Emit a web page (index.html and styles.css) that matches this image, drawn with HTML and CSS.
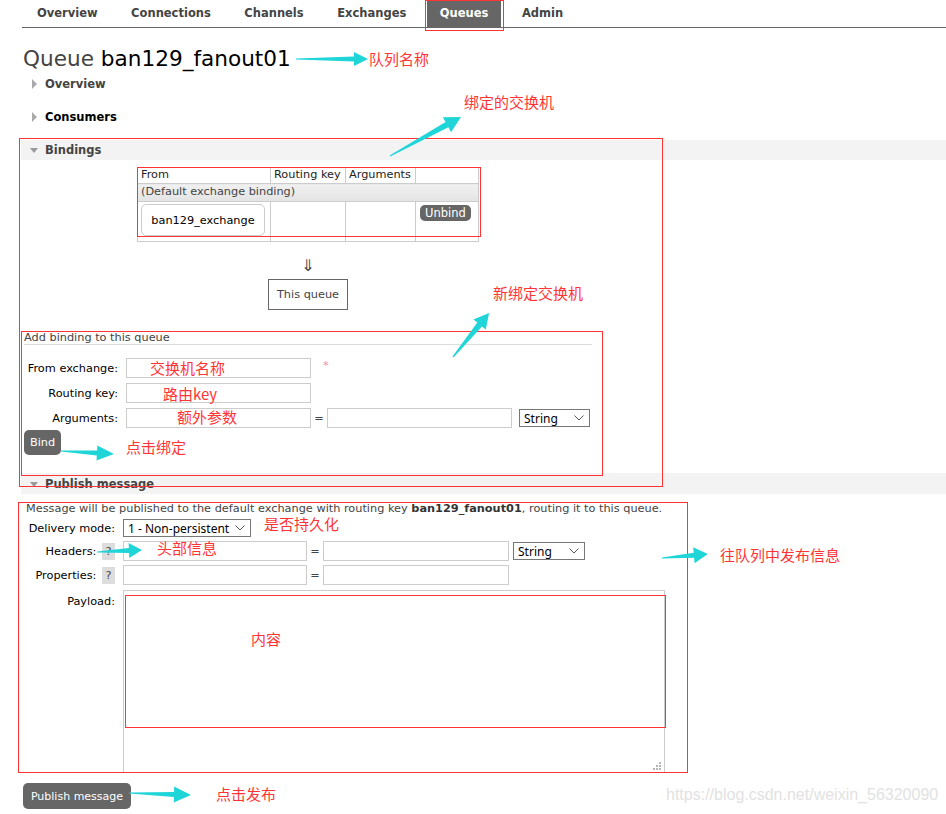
FILE: index.html
```html
<!DOCTYPE html>
<html lang="zh">
<head>
<meta charset="utf-8">
<title>Queue ban129_fanout01</title>
<link rel="stylesheet" href="styles.css">
</head>
<body>
<nav class="tabs">
  <span class="tab">Overview</span>
  <span class="tab">Connections</span>
  <span class="tab">Channels</span>
  <span class="tab">Exchanges</span>
  <span class="tab tab-active">Queues</span>
  <span class="tab">Admin</span>
</nav>
<main class="page">
  <h1 class="title"><span class="title-kind">Queue</span> ban129_fanout01</h1>

  <div class="sec sec-closed first"><span class="sec-icon"><span class="tri-right"></span></span><span class="sec-title muted">Overview</span></div>
  <div class="sec sec-closed"><span class="sec-icon"><span class="tri-right"></span></span><span class="sec-title">Consumers</span></div>
  <div class="sec sec-open"><span class="sec-icon"><span class="tri-down"></span></span><span class="sec-title muted">Bindings</span></div>

  <div class="bind-body">
    <table class="bind-table">
      <tr class="row-head"><th class="c-from">From</th><th class="c-key">Routing key</th><th class="c-args">Arguments</th><th class="c-act"></th></tr>
      <tr class="row-default"><td colspan="4">(Default exchange binding)</td></tr>
      <tr class="row-data">
        <td class="c-from"><span class="exch-box">ban129_exchange</span></td>
        <td></td><td></td>
        <td class="c-act"><span class="btn btn-small">Unbind</span></td>
      </tr>
      <tr class="row-pad"><td></td><td></td><td></td><td></td></tr>
    </table>
    <div class="down-arrow">⇓</div>
    <div class="this-queue">This queue</div>

    <h3 class="sub">Add binding to this queue</h3>
    <div class="form">
      <div class="frow">
        <label class="flabel">From exchange:</label>
        <span class="input"></span>
        <span class="req">*</span>
      </div>
      <div class="frow">
        <label class="flabel">Routing key:</label>
        <span class="input"></span>
      </div>
      <div class="frow">
        <label class="flabel">Arguments:</label>
        <span class="input"></span>
        <span class="eq">=</span>
        <span class="input"></span>
        <span class="select sel-str"><span>String</span><svg width="10" height="6" viewBox="0 0 10 6"><path d="M0.5 0.5 L5 5 L9.5 0.5" fill="none" stroke="#555" stroke-width="1"/></svg></span>
      </div>
    </div>
    <span class="btn btn-bind">Bind</span>
  </div>

  <div class="sec sec-open pub-head"><span class="sec-icon"><span class="tri-down"></span></span><span class="sec-title muted">Publish message</span></div>

  <div class="pub-body">
    <p class="pub-note">Message will be published to the default exchange with routing key <b>ban129_fanout01</b>, routing it to this queue.</p>
    <div class="prow">
      <label class="plabel">Delivery mode:</label>
      <span class="select sel-mode"><span>1 - Non-persistent</span><svg width="10" height="6" viewBox="0 0 10 6"><path d="M0.5 0.5 L5 5 L9.5 0.5" fill="none" stroke="#555" stroke-width="1"/></svg></span>
    </div>
    <div class="prow">
      <label class="plabel">Headers: <span class="help">?</span></label>
      <span class="input pin"></span>
      <span class="eq">=</span>
      <span class="input pin"></span>
      <span class="select sel-str2"><span>String</span><svg width="10" height="6" viewBox="0 0 10 6"><path d="M0.5 0.5 L5 5 L9.5 0.5" fill="none" stroke="#555" stroke-width="1"/></svg></span>
    </div>
    <div class="prow">
      <label class="plabel">Properties: <span class="help">?</span></label>
      <span class="input pin"></span>
      <span class="eq">=</span>
      <span class="input pin"></span>
    </div>
    <div class="prow prow-top">
      <label class="plabel">Payload:</label>
      <div class="payload-wrap">
        <div class="payload"></div>
        <svg class="grip" width="9" height="9" viewBox="0 0 9 9">
          <g fill="#b5b5b5">
            <rect x="6" y="0" width="2" height="2"/>
            <rect x="3" y="3" width="2" height="2"/>
            <rect x="6" y="3" width="2" height="2"/>
            <rect x="0" y="6" width="2" height="2"/>
            <rect x="3" y="6" width="2" height="2"/>
            <rect x="6" y="6" width="2" height="2"/>
          </g>
        </svg>
        <div class="payload-mark"></div>
      </div>
    </div>
  </div>
  <span class="btn btn-pub">Publish message</span>
</main>

<div class="overlay">
  <svg class="marks" width="946" height="814" viewBox="0 0 946 814">
    <g fill="none" stroke="#ff3535" stroke-width="1">
      <rect x="425.5" y="0.5" width="78" height="30"/>
      <rect x="19.5" y="138.5" width="643" height="348"/>
      <rect x="137.5" y="167.5" width="343" height="69"/>
      <rect x="21.5" y="331.5" width="581" height="144"/>
      <rect x="18.5" y="502.5" width="669" height="270"/>
    </g>
    <g fill="#20d5d8">
      <g transform="translate(296 59)"><polygon points="0,-0.6 58,-2.5 58,-7 72,0 58,7 58,2.5 0,0.6"/></g>
      <g transform="translate(390 156) rotate(-28.8)"><polygon points="0,-0.6 65,-3 65,-8.5 81,0 65,8.5 65,3 0,0.6"/></g>
      <g transform="translate(453 357) rotate(-50.7)"><polygon points="0,-0.6 42,-3 42,-8 57,0 42,8 42,3 0,0.6"/></g>
      <g transform="translate(61 451) rotate(3.2)"><polygon points="0,-0.6 36,-2.5 36,-7.5 53,0 36,7.5 36,2.5 0,0.6"/></g>
      <g transform="translate(97 552) rotate(-2.5)"><polygon points="0,-0.6 32,-2.5 32,-7.5 45,0 32,7.5 32,2.5 0,0.6"/></g>
      <g transform="translate(662 558) rotate(-5)"><polygon points="0,-0.6 32,-2.5 32,-8 46,0 32,8 32,2.5 0,0.6"/></g>
      <g transform="translate(129 793) rotate(1.8)"><polygon points="0,-0.6 45,-2.5 45,-8 62,0 45,8 45,2.5 0,0.6"/></g>
    </g>
  </svg>
  <span class="note n1">队列名称</span>
  <span class="note n2">绑定的交换机</span>
  <span class="note n3">新绑定交换机</span>
  <span class="note n4">交换机名称</span>
  <span class="note n5">路由key</span>
  <span class="note n6">额外参数</span>
  <span class="note n7">点击绑定</span>
  <span class="note n8">是否持久化</span>
  <span class="note n9">头部信息</span>
  <span class="note n10">往队列中发布信息</span>
  <span class="note n11">内容</span>
  <span class="note n12">点击发布</span>
  <span class="watermark">https://blog.csdn.net/weixin_56320090</span>
</div>
</body>
</html>
```

FILE: styles.css
```css
* { box-sizing: border-box; }

html, body {
  margin: 0;
  padding: 0;
}

body {
  position: relative;
  width: 946px;
  height: 814px;
  overflow: hidden;
  background: #fff;
  color: #000;
  font-family: "DejaVu Sans", Verdana, sans-serif;
  font-size: 11.3px;
}

/* ---------- top tabs ---------- */
.tabs {
  display: flex;
  gap: 7.5px;
  margin: 0 0 0 22px;
  padding-left: 2px;
  height: 28px;
  border-bottom: 1px solid #666;
}

.tab {
  padding: 0 13px;
  line-height: 27px;
  font-size: 11.5px;
  font-weight: bold;
  color: #444;
}

.tab-active {
  background: #666;
  color: #fff;
}

/* ---------- page ---------- */
.page {
  padding-left: 21px;
}

.title {
  margin: 18px 0 0 2px;
  font-size: 21.6px;
  line-height: 26px;
  font-weight: normal;
  color: #000;
}

.title-kind { color: #444; }

/* ---------- section headers ---------- */
.sec {
  display: flex;
  align-items: center;
  height: 20px;
  margin-top: 13px;
}

.sec.first { margin-top: 2px; }

.sec-open { background: #f3f3f3; }

.sec-icon {
  display: flex;
  align-items: center;
  width: 24px;
  height: 20px;
}

.tri-right {
  margin-left: 11px;
  width: 0;
  height: 0;
  border-top: 5px solid transparent;
  border-bottom: 5px solid transparent;
  border-left: 5px solid #aaa;
}

.tri-down {
  margin-left: 9px;
  width: 0;
  height: 0;
  border-left: 4px solid transparent;
  border-right: 4px solid transparent;
  border-top: 5px solid #999;
}

.sec-title {
  font-weight: bold;
  font-size: 11.5px;
  color: #000;
}

.sec-title.muted { color: #444; }

/* ---------- bindings ---------- */
.bind-body {
  width: 568px;
  margin-left: 3px;
  display: flex;
  flex-direction: column;
  align-items: center;
}

.bind-table {
  margin-top: 7px;
  border-collapse: collapse;
  color: #444;
  font-size: 11.3px;
}

.bind-table th,
.bind-table td {
  border: 1px solid #ccc;
  padding: 0 3px;
  text-align: left;
  font-weight: normal;
  vertical-align: top;
}

.row-head th { height: 16px; line-height: 14px; color: #222; }
.c-from { width: 133px; }
.c-key { width: 75px; }
.c-args { width: 70px; }
.c-act { width: 63px; }

.row-default td {
  height: 18px;
  line-height: 16px;
  background: linear-gradient(#f0f0f0, #e4e4e4);
}

.row-data td { height: 35px; padding-top: 2px; }
.row-data .c-act { padding: 3px 4px 0; }

.row-pad td { height: 5px; padding: 0; }

.exch-box {
  display: flex;
  align-items: center;
  justify-content: center;
  width: 124px;
  height: 32px;
  border: 1px solid #ccc;
  border-radius: 5px;
  background: #fff;
  color: #000;
}

.btn {
  display: inline-flex;
  align-items: center;
  justify-content: center;
  background: #666;
  color: #fff;
  border-radius: 5px;
  font-size: 11.3px;
}

.btn-small {
  width: 51px;
  height: 16px;
  font-size: 11.5px;
}

.down-arrow {
  margin-top: 15px;
  font-size: 16px;
  line-height: 18px;
  color: #444;
}

.this-queue {
  margin-top: 4px;
  width: 80px;
  height: 31px;
  border: 1px solid #666;
  display: flex;
  align-items: center;
  justify-content: center;
  color: #444;
}

.sub {
  align-self: stretch;
  margin: 21px 0 0;
  font-size: 11.3px;
  line-height: 13px;
  font-weight: normal;
  color: #444;
  border-bottom: 1px solid #ddd;
}

.form {
  align-self: stretch;
  margin-top: 13px;
  display: flex;
  flex-direction: column;
  gap: 5px;
}

.frow {
  display: flex;
  align-items: center;
  height: 20px;
}

.flabel {
  width: 94px;
  text-align: right;
  margin-right: 8px;
}

.input {
  display: block;
  width: 185px;
  height: 20px;
  border: 1px solid #ccc;
  background: #fff;
}

.req {
  margin-left: 12px;
  color: #f88;
  align-self: flex-start;
  margin-top: 1px;
}

.eq {
  width: 16px;
  text-align: center;
  color: #444;
}

.select {
  display: flex;
  align-items: center;
  justify-content: space-between;
  height: 18px;
  border: 1px solid #777;
  background: #fff;
  padding: 0 5px 0 4px;
  font-family: "Noto Sans", "DejaVu Sans", sans-serif;
  font-size: 12px;
  color: #000;
}

.sel-str { width: 71px; margin-left: 7px; }

.btn-bind {
  align-self: flex-start;
  margin-top: 2px;
  width: 37px;
  height: 25px;
}

/* ---------- publish ---------- */
.pub-head { margin-top: 18px; height: 21px; padding-top: 1px; }

.pub-body {
  margin-left: 5px;
  width: 644px;
}

.pub-note {
  margin: 9px 0 0;
  line-height: 12px;
  color: #444;
  white-space: nowrap;
}

.pub-note b { color: #333; }

.prow {
  display: flex;
  align-items: center;
  margin-top: 4px;
  min-height: 18px;
}

.prow-top { align-items: flex-start; margin-top: 5px; }

.plabel {
  width: 89px;
  margin-right: 8px;
  text-align: right;
  white-space: nowrap;
}

.prow-top .plabel { margin-top: 5px; }

.help {
  display: inline-block;
  width: 13px;
  height: 17px;
  margin-left: 2px;
  line-height: 17px;
  text-align: center;
  background: #ddd;
  color: #444;
  vertical-align: middle;
}

.pin { width: 184px; }
.pin + .eq + .pin { width: 186px; }

.sel-mode { width: 128px; }
.sel-str2 { width: 72px; margin-left: 4px; }

.payload-wrap {
  position: relative;
  width: 542px;
  height: 183px;
}

.payload {
  width: 542px;
  height: 183px;
  border: 1px solid #ccc;
  background: #fff;
}

.grip {
  position: absolute;
  right: 3px;
  bottom: 2px;
}

.payload-mark {
  position: absolute;
  left: 2px;
  top: 5px;
  width: 541px;
  height: 133px;
  border: 1px solid #ff3535;
}

.btn-pub {
  margin-top: 10px;
  margin-left: 2px;
  width: 108px;
  height: 26px;
  font-size: 11px;
}

/* ---------- annotation overlay ---------- */
.overlay {
  position: absolute;
  left: 0;
  top: 0;
  width: 946px;
  height: 814px;
  pointer-events: none;
}

.marks {
  position: absolute;
  left: 0;
  top: 0;
}

.note {
  position: absolute;
  font-family: "Noto Sans CJK SC", "Noto Sans", sans-serif;
  font-size: 15px;
  line-height: 20px;
  color: #ff3535;
  white-space: nowrap;
}

.n1 { left: 369px; top: 49px; }
.n2 { left: 464px; top: 92px; }
.n3 { left: 493px; top: 283px; }
.n4 { left: 150px; top: 358px; }
.n5 { left: 163px; top: 384px; }
.n6 { left: 177px; top: 407px; }
.n7 { left: 126px; top: 437px; }
.n8 { left: 264px; top: 514px; }
.n9 { left: 157px; top: 538px; }
.n10 { left: 720px; top: 545px; }
.n11 { left: 251px; top: 629px; }
.n12 { left: 216px; top: 784px; }

.watermark {
  position: absolute;
  left: 666px;
  top: 785px;
  font-family: "Liberation Sans", Arial, sans-serif;
  font-size: 16px;
  line-height: 20px;
  color: #e2e2e2;
  white-space: nowrap;
}
```
